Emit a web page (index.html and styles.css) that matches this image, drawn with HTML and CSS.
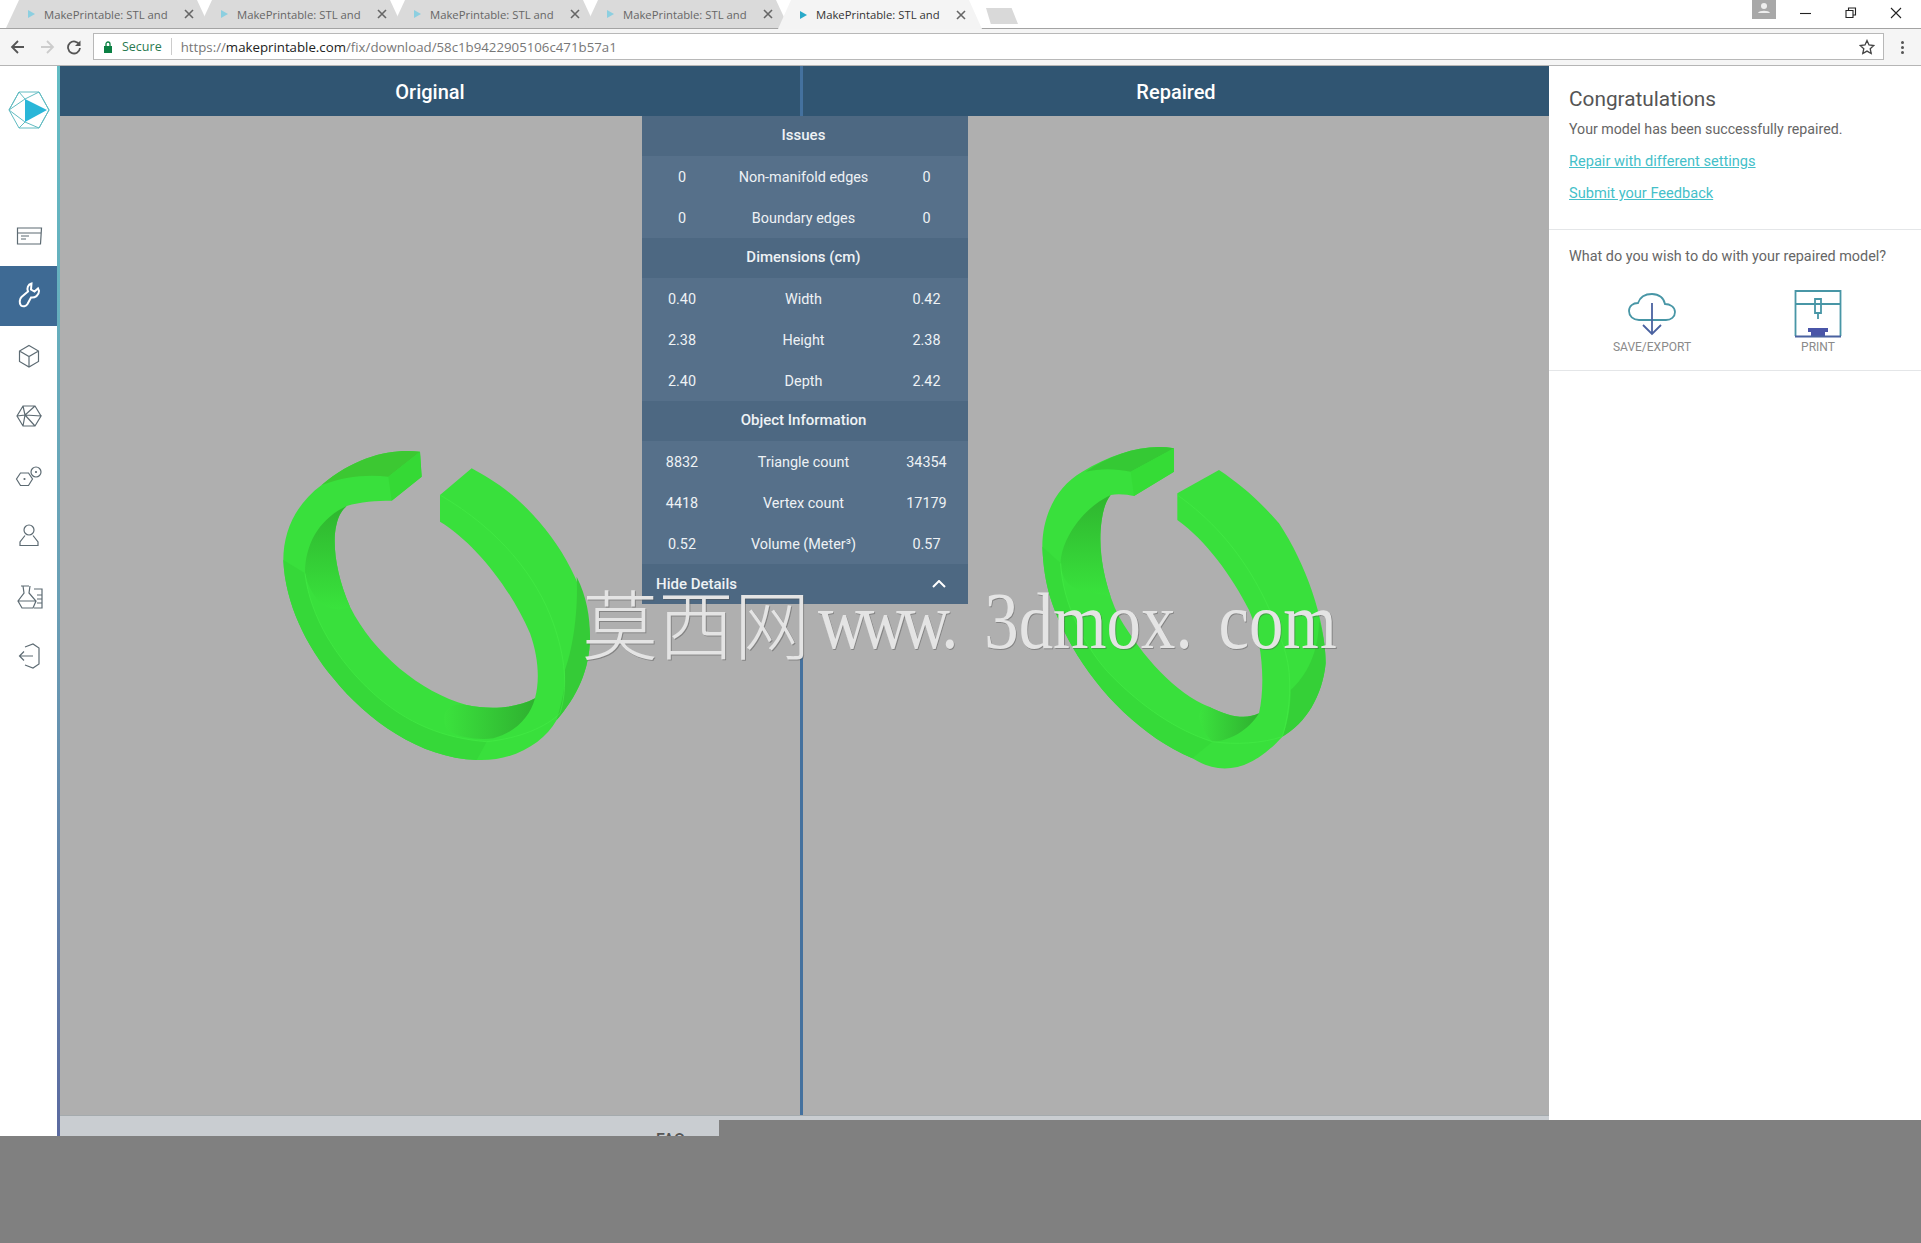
FILE: index.html
```html
<!DOCTYPE html>
<html lang="en">
<head>
    <meta charset="UTF-8">
    <title>MakePrintable: STL and 3D file repair</title>
    <link rel="stylesheet" href="styles.css">
</head>
<body>
    <div class="tabstrip">
        <div class="tab">
            <svg class="favicon" viewBox="0 0 10 10"><path d="M2 1l7 4-7 4z"/></svg>
            <span class="tab-title">MakePrintable: STL and</span>
            <svg class="tab-close" viewBox="0 0 10 10"><path d="M1 1l8 8M9 1l-8 8"/></svg>
        </div>
        <div class="tab">
            <svg class="favicon" viewBox="0 0 10 10"><path d="M2 1l7 4-7 4z"/></svg>
            <span class="tab-title">MakePrintable: STL and</span>
            <svg class="tab-close" viewBox="0 0 10 10"><path d="M1 1l8 8M9 1l-8 8"/></svg>
        </div>
        <div class="tab">
            <svg class="favicon" viewBox="0 0 10 10"><path d="M2 1l7 4-7 4z"/></svg>
            <span class="tab-title">MakePrintable: STL and</span>
            <svg class="tab-close" viewBox="0 0 10 10"><path d="M1 1l8 8M9 1l-8 8"/></svg>
        </div>
        <div class="tab">
            <svg class="favicon" viewBox="0 0 10 10"><path d="M2 1l7 4-7 4z"/></svg>
            <span class="tab-title">MakePrintable: STL and</span>
            <svg class="tab-close" viewBox="0 0 10 10"><path d="M1 1l8 8M9 1l-8 8"/></svg>
        </div>
        <div class="tab active">
            <svg class="favicon" viewBox="0 0 10 10"><path d="M2 1l7 4-7 4z"/></svg>
            <span class="tab-title">MakePrintable: STL and</span>
            <svg class="tab-close" viewBox="0 0 10 10"><path d="M1 1l8 8M9 1l-8 8"/></svg>
        </div>
        <div class="new-tab"></div>
        <div class="window-buttons">
            <div class="avatar">
                <svg viewBox="0 0 24 19" width="24" height="19"><circle cx="12" cy="6" r="3" fill="#eee"/><path d="M6 13c1-3 11-3 12 0z" fill="#eee"/></svg>
            </div>
            <svg class="win-icon" viewBox="0 0 12 12"><path d="M0 6.500h11"/></svg>
            <svg class="win-icon" viewBox="0 0 12 12"><path d="M1 3.500h7v7H1zM3.500 3.500V1h7v7H8"/></svg>
            <svg class="win-icon" viewBox="0 0 12 12"><path d="M1 1l10 10M11 1L1 11"/></svg>
        </div>
    </div>

    <div class="toolbar">
        <svg class="nav-icon" viewBox="0 0 16 16"><path d="M14 8H2M8 2L2 8l6 6"/></svg>
        <svg class="nav-icon off" viewBox="0 0 16 16"><path d="M2 8h12M8 2l6 6-6 6"/></svg>
        <svg class="nav-icon" viewBox="0 0 16 16"><path d="M13.500 6A6 6 0 1 0 14 9"/><path class="solid" d="M14.500 1.500v5.500h-5.500z"/></svg>
        <div class="omnibox">
            <svg class="lock" viewBox="0 0 10 12"><path d="M1 5h8v7H1z"/><path class="shackle" d="M3 5V3a2 2 0 0 1 4 0v2"/></svg>
            <span class="secure">Secure</span>
            <span class="url"><span class="url-dim">https://</span>makeprintable.com<span class="url-dim">/fix/download/58c1b9422905106c471b57a1</span></span>
            <svg class="star" viewBox="0 0 16 16"><path d="M8 1.500l2 4.500 4.800.5-3.600 3.200 1 4.800L8 12.100l-4.200 2.400 1-4.800L1.200 6.500 6 6z"/></svg>
        </div>
        <div class="menu-dots"><i></i><i></i><i></i></div>
    </div>

    <div class="app">
        <nav class="sidebar">
            <div class="logo">
                <svg viewBox="0 0 44 40" width="44" height="40">
                    <path class="logo-lines" d="M12 2h20l10 18-10 18H12L2 20zM12 2l6 7M12 2L2 20l16 12M32 2L18 9M32 2l10 18M2 20l16-11M12 38l6-6M32 38L18 32M32 38l10-18"/>
                    <path d="M18 9l22 11-22 12z" fill="#29b6d8"/>
                </svg>
            </div>
            <a class="nav-item">
                <svg viewBox="0 0 30 30"><path d="M3.500 7h24l-1 16h-23zM3.500 12h24M7 15h8M7 18h5"/></svg>
            </a>
            <a class="nav-item current">
                <svg viewBox="0 0 30 30"><path d="M17.500 2.500C14 3.500 12.500 7 14 10.500L7.500 16C5.500 18 5 22 7 24.500 9 26 12 25.500 13.500 23L17 16.500C21 17 25 14.500 25 10L24 7.500 20.500 10.500 17 8.500Z"/></svg>
            </a>
            <a class="nav-item">
                <svg viewBox="0 0 30 30"><path d="M15 4.500l9.500 5.500v10.500L15 26l-9.500-5.500V10zM5.500 10l9.500 5.500 9.500-5.500M15 15.500V26"/></svg>
            </a>
            <a class="nav-item">
                <svg viewBox="0 0 30 30"><path d="M9 5h12l6 10-6 10H9L3 15zM9 5l2 9-8 1M21 5l-10 9 10 11M11 14l-2 11M21 25l6-10-16-1"/></svg>
            </a>
            <a class="nav-item">
                <svg viewBox="0 0 30 30"><path d="M6.500 12h8l4 6-4 6.500h-8l-4-6.500z"/><circle cx="22" cy="11" r="5"/><circle cx="22" cy="11" r=".5"/><circle cx="10.500" cy="18" r=".5"/></svg>
            </a>
            <a class="nav-item">
                <svg viewBox="0 0 30 30"><circle cx="15" cy="9" r="5"/><path d="M11 14.500L6 21v3.500h18V21l-5-6.500"/></svg>
            </a>
            <a class="nav-item">
                <svg viewBox="0 0 30 30"><path d="M7 5h8M9 5l1 7-6 8 4 7h11l3-7-7-8 1-7M4.500 20h17M20 8h8v19h-8M23 14h5M23 18h5M23 22h5"/></svg>
            </a>
            <a class="nav-item">
                <svg viewBox="0 0 30 30"><path d="M11 6l8-3 6 4v16l-6 4-8-3M19 15H6M10 10.500L5.500 15l4.500 4.500"/></svg>
            </a>
        </nav>

        <main class="workspace">
            <div class="panes">
                <section class="pane pane-original">
                    <h2 class="pane-title">Original</h2>
                    <div class="stage">
                        <svg class="ring ring-a" viewBox="0 0 1080 1020">
                            <defs>
                                <linearGradient id="wallA" x1="0" y1="0" x2="0" y2="1">
                                    <stop offset="0" stop-color="#2fb52f"/>
                                    <stop offset="1" stop-color="#39e33c"/>
                                </linearGradient>
                                <linearGradient id="wallB" x1="1" y1="0" x2="0" y2="0">
                                    <stop offset="0" stop-color="#2fb030"/>
                                    <stop offset="1" stop-color="#3be23d"/>
                                </linearGradient>
                            </defs>
                            <path fill="#39e03c" d="M480 65C400 55 290 75 185 165 110 220 70 300 70 390 75 520 140 650 220 745 320 870 480 985 650 990 760 995 850 940 890 870 950 800 990 720 990 620 985 480 900 330 790 225 740 175 680 140 635 115L540 195V275C640 335 750 470 810 610 835 680 840 750 825 805 770 835 690 840 620 825 480 785 340 670 270 530 235 450 220 370 225 310 230 270 240 245 260 228 300 215 350 212 395 212L485 140Z"/>
                            <path fill="#3cc832" d="M480 65C400 55 290 75 185 165 250 140 320 132 385 140Z"/>
                            <path fill="#35d935" d="M480 65L485 140 395 212 385 140Z"/>
                            <path fill="url(#wallA)" d="M260 228C180 265 135 340 135 430 150 500 200 560 270 530 235 450 220 370 225 310 230 270 240 245 260 228Z"/>
                            <path fill="url(#wallB)" d="M825 805C770 835 690 840 620 825 560 815 540 850 560 900 600 925 660 930 700 925 770 905 810 860 825 805Z"/>
                            <path fill="#35cb37" d="M950 440C980 500 990 560 990 620 990 720 950 800 890 870 905 820 917 770 915 720 940 650 955 540 950 440Z"/>
                            <path fill="#36d839" d="M135 430C150 560 230 690 340 790 440 880 550 925 680 935L650 990C480 985 320 870 220 745 140 650 75 520 70 390Z"/>
                            <path fill="none" stroke="#44ec46" stroke-width="2" d="M135 430C150 560 230 690 340 790 440 880 550 925 680 935 780 925 860 890 900 850 925 770 915 680 880 580 830 440 720 300 540 195"/>
                        </svg>
                    </div>
                </section>
                <section class="pane pane-repaired">
                    <h2 class="pane-title">Repaired</h2>
                    <div class="stage">
                        <svg class="ring ring-b" viewBox="0 0 1020 1050">
                            <path fill="#39e03c" d="M465 55C380 40 280 70 190 125 110 170 70 260 70 350 75 470 100 540 160 650 240 790 370 920 520 985 600 1035 690 1030 790 920 860 880 910 800 920 700 920 570 860 400 780 280 720 210 660 160 600 120L475 190V270C560 330 640 440 690 540 730 630 740 760 720 850 680 870 630 860 570 830 470 790 370 680 300 560 260 480 240 380 245 300 248 260 255 220 275 195 300 190 330 195 345 198L465 125Z"/>
                            <path fill="#35c934" d="M465 55C380 40 280 70 200 125 240 115 290 115 335 125Z"/>
                            <path fill="#35dc36" d="M465 55V125L345 198 335 125Z"/>
                            <path fill="url(#wallA)" d="M275 195C180 240 125 340 125 400 130 500 220 480 275 500 255 440 240 370 245 300 248 260 255 220 275 195Z"/>
                            <path fill="url(#wallB)" d="M720 850C680 870 630 860 570 830 530 830 530 880 580 935 630 935 690 900 720 850Z"/>
                            <path fill="#35d037" d="M900 570C915 620 920 660 920 700 910 800 860 880 790 920 810 870 815 820 815 780 860 740 900 670 900 570Z"/>
                            <path fill="#36da39" d="M125 400C130 520 200 660 280 740 370 830 470 900 580 935L520 985C370 920 240 790 160 650 100 540 75 470 70 350Z"/>
                            <path fill="none" stroke="#44ec46" stroke-width="2" d="M125 400C130 520 200 660 280 740 370 830 470 900 580 935 650 945 730 940 790 920 815 840 820 740 800 670 760 540 680 340 475 195"/>
                        </svg>
                    </div>
                </section>
            </div>
            <div class="faq-strip"><span>FAQs</span></div>

            <div class="details">
                <div class="details-head">Issues</div>
                <div class="details-row"><span>0</span><span>Non-manifold edges</span><span>0</span></div>
                <div class="details-row"><span>0</span><span>Boundary edges</span><span>0</span></div>
                <div class="details-head">Dimensions (cm)</div>
                <div class="details-row"><span>0.40</span><span>Width</span><span>0.42</span></div>
                <div class="details-row"><span>2.38</span><span>Height</span><span>2.38</span></div>
                <div class="details-row"><span>2.40</span><span>Depth</span><span>2.42</span></div>
                <div class="details-head">Object Information</div>
                <div class="details-row"><span>8832</span><span>Triangle count</span><span>34354</span></div>
                <div class="details-row"><span>4418</span><span>Vertex count</span><span>17179</span></div>
                <div class="details-row"><span>0.52</span><span>Volume (Meter³)</span><span>0.57</span></div>
                <div class="details-foot">
                    <span>Hide Details</span>
                    <svg viewBox="0 0 14 8" width="14" height="8"><path d="M1 7l6-6 6 6"/></svg>
                </div>
            </div>
        </main>

        <aside class="panel">
            <div class="panel-section">
                <h3>Congratulations</h3>
                <p>Your model has been successfully repaired.</p>
                <a class="panel-link">Repair with different settings</a>
                <a class="panel-link">Submit your Feedback</a>
            </div>
            <div class="panel-section">
                <p class="question">What do you wish to do with your repaired model?</p>
                <div class="actions">
                    <div class="action">
                        <svg viewBox="0 0 48 48" width="48" height="48">
                            <path class="icon-teal" d="M14 30H11C5 30 1 26 1 21S5 13 10 13C12 7 17 4 24 4 31 4 36 8 37 14 42 14 47 17 47 22S43 30 38 30H14Z"/>
                            <path class="icon-blue" d="M24 13V44M15 35l9 9 9-9"/>
                        </svg>
                        <span>SAVE/EXPORT</span>
                    </div>
                    <div class="action">
                        <svg viewBox="0 0 48 48" width="48" height="48">
                            <path class="icon-teal" d="M1.500 46V1h45v45M1.500 14h45"/>
                            <path class="icon-teal" d="M21 9h6v14h-6zM24 23v6"/>
                            <path d="M14 38h20v4h-3v4H17v-4h-3z" fill="#4a55a8"/>
                            <path class="icon-blue" d="M1 46.500h46"/>
                        </svg>
                        <span>PRINT</span>
                    </div>
                </div>
            </div>
        </aside>
    </div>
    <div class="bottom-notch"></div>

    <div class="watermark"><span class="wm-cjk">莫西网</span><span class="wm-latin"><span class="wm-www">www</span>. 3dmox. com</span></div>
</body>
</html>
```

FILE: styles.css
```css
* {
    box-sizing: border-box;
}

body {
    margin: 0;
    width: 1921px;
    height: 1243px;
    overflow: hidden;
    position: relative;
    background: #808080;
    font-family: Roboto, "Liberation Sans", sans-serif;
    color: #555;
}

/* browser chrome */
.tabstrip {
    height: 29px;
    display: flex;
    padding-left: 6px;
    background: #fff;
    border-bottom: 1px solid #a3a3a3;
}

.tab {
    width: 204px;
    height: 28px;
    margin-right: -11px;
    display: flex;
    align-items: center;
    padding-left: 20px;
    background: #dadada;
    clip-path: polygon(0 100%, 13px 0, calc(100% - 13px) 0, 100% 100%);
    font-family: "Open Sans", sans-serif;
    font-size: 11.300px;
    color: #666;
}

.tab.active {
    height: 29px;
    background: #f4f4f4;
    z-index: 1;
    color: #333;
}

.favicon {
    width: 10px;
    height: 10px;
    fill: #8ccfe0;
    flex: none;
}

.active .favicon {
    fill: #29a9c9;
}

.tab-title {
    width: 125px;
    margin-left: 8px;
    white-space: nowrap;
}

.tab-close {
    width: 10px;
    height: 10px;
    margin-left: 15px;
    flex: none;
    fill: none;
    stroke: #666;
    stroke-width: 1.600;
}

.new-tab {
    width: 32px;
    height: 16px;
    margin: 8px 0 0 15px;
    background: #d9d9d9;
    clip-path: polygon(0 0, 80% 0, 100% 100%, 15% 100%);
}

.window-buttons {
    margin-left: auto;
    padding-right: 19px;
    display: flex;
    align-items: flex-start;
}

.avatar {
    width: 24px;
    height: 19px;
    background: #a8a8a8;
    margin-right: 24px;
}

.win-icon {
    width: 12px;
    height: 12px;
    margin: 7px 0 0 33px;
    fill: none;
    stroke: #222;
    stroke-width: 1.100;
}

.avatar + .win-icon {
    margin-left: 0;
}

.toolbar {
    height: 37px;
    display: flex;
    align-items: center;
    padding-left: 10px;
    background: #f5f5f5;
    border-bottom: 1px solid #b5b5b5;
}

.nav-icon {
    width: 16px;
    height: 16px;
    margin-right: 13px;
    flex: none;
    fill: none;
    stroke: #555;
    stroke-width: 1.800;
}

.nav-icon:nth-child(3) {
    margin-left: -2px;
    margin-right: 11px;
}

.nav-icon.off {
    stroke: #ccc;
}

.nav-icon .solid {
    fill: #555;
    stroke: none;
}

.omnibox {
    width: 1791px;
    height: 27px;
    margin: 0 0 1px;
    display: flex;
    align-items: center;
    padding: 0 8px 0 9px;
    background: #fff;
    border: 1px solid #b8b8b8;
    font-family: "Open Sans", sans-serif;
    font-size: 13.250px;
}

.lock {
    width: 10px;
    height: 12px;
    fill: #0b8043;
}

.lock .shackle {
    fill: none;
    stroke: #0b8043;
    stroke-width: 1.300;
}

.secure {
    margin-left: 9px;
    padding-right: 9px;
    border-right: 1px solid #ccc;
    color: #2a7a50;
    font-size: 12.500px;
}

.url {
    margin-left: 9px;
    color: #222;
}

.url-dim {
    color: #777;
}

.star {
    width: 16px;
    height: 16px;
    margin-left: auto;
    fill: none;
    stroke: #444;
    stroke-width: 1.300;
}

.menu-dots {
    display: flex;
    flex-direction: column;
    gap: 2px;
    margin: 0 0 0 17px;
}

.menu-dots i {
    width: 3px;
    height: 3px;
    background: #555;
    border-radius: 50%;
}

/* app */
.app {
    height: 1070px;
    display: flex;
}

.sidebar {
    width: 60px;
    flex: none;
    background: #fff;
    border-right: 3px solid;
    border-image: linear-gradient(to bottom, #63bcc4, #6a9fb5 50%, #5b6aa0) 1;
}

.logo {
    height: 140px;
    display: flex;
    padding: 24px 0 0 7px;
}

.logo-lines {
    fill: none;
    stroke: #62bcc2;
    stroke-width: 1;
}

.nav-item {
    height: 60px;
    display: flex;
    align-items: center;
    justify-content: center;
}

.nav-item svg {
    width: 30px;
    height: 30px;
    fill: none;
    stroke: #5d6b73;
    stroke-width: 1.200;
}

.nav-item.current {
    background: #3e6a94;
}

.nav-item.current svg {
    stroke: #fff;
    stroke-width: 2;
}

.workspace {
    width: 1489px;
    flex: none;
    display: flex;
    flex-direction: column;
    position: relative;
}

.panes {
    flex: 1;
    display: flex;
}

.pane {
    display: flex;
    flex-direction: column;
}

.pane-original {
    width: 743px;
    border-right: 3px solid #44719e;
}

.pane-repaired {
    flex: 1;
}

.pane-title {
    height: 50px;
    margin: 0;
    line-height: 52px;
    text-align: center;
    background: #305572;
    color: #fff;
    font-size: 20px;
    font-weight: 500;
}

.stage {
    flex: 1;
    position: relative;
    background: #afafaf;
}

.ring {
    position: absolute;
}

.ring-a {
    left: 200px;
    top: 314px;
    width: 360px;
    height: 340px;
}

.ring-b {
    left: 216px;
    top: 314px;
    width: 340px;
    height: 350px;
}

.faq-strip {
    height: 21px;
    background: #c9cdd1;
    border-top: 1px solid #a4aaad;
    padding: 14px 0 0 596px;
    overflow: hidden;
    font-size: 16px;
    font-weight: 500;
    color: #555;
}

/* comparison table over the two panes */
.details {
    position: absolute;
    left: 582px;
    top: 50px;
    width: 326px;
    background: #56708a;
    color: #eef2f5;
    font-size: 14.400px;
}

.details-head {
    height: 40px;
    line-height: 38px;
    padding-right: 3px;
    text-align: center;
    background: #4d6882;
    font-size: 15px;
    font-weight: 500;
}

.details-row {
    height: 41px;
    padding-top: 2px;
    display: grid;
    grid-template-columns: 80px 163px 83px;
    align-items: center;
    text-align: center;
}

.details-foot {
    height: 40px;
    display: flex;
    align-items: center;
    justify-content: space-between;
    padding: 0 22px 0 14px;
    background: #4d6882;
    font-size: 15px;
    font-weight: 500;
}

.details-foot svg {
    fill: none;
    stroke: #fff;
    stroke-width: 2;
}

/* right panel */
.panel {
    flex: 1;
    background: #fff;
}

.panel-section {
    padding: 21px 20px 0;
    border-bottom: 1px solid #e4e6e8;
}

.panel-section:first-child {
    height: 164px;
}

.panel-section:last-child {
    height: 141px;
    padding-top: 17px;
}

.panel h3 {
    margin: 0 0 8px;
    font-size: 20.800px;
    font-weight: 400;
    line-height: 24px;
    color: #555;
}

.panel p {
    margin: 0;
    font-size: 14.200px;
    line-height: 20px;
    color: #666;
}

.panel p.question {
    font-size: 14.400px;
}

.panel-link {
    display: block;
    margin-top: 12px;
    font-size: 14.600px;
    line-height: 20px;
    color: #45bfc9;
    text-decoration: underline;
}

.actions {
    display: flex;
    gap: 66px;
    margin: 23px 0 0 33px;
}

.action {
    width: 100px;
    display: flex;
    flex-direction: column;
    align-items: center;
    gap: 2px;
    font-size: 12px;
    color: #8a8a8a;
}

.icon-teal {
    fill: none;
    stroke: #4896a6;
    stroke-width: 1.800;
}

.icon-blue {
    fill: none;
    stroke: #4a62a0;
    stroke-width: 1.800;
}

.bottom-notch {
    position: absolute;
    left: 719px;
    right: 0;
    top: 1120px;
    height: 16px;
    background: #808080;
}

.watermark {
    position: absolute;
    left: 582px;
    top: 579px;
    display: flex;
    align-items: flex-end;
    color: #e4e4e4;
    text-shadow: 1px 1px 0 rgba(80, 80, 80, 0.45);
    white-space: nowrap;
    pointer-events: none;
}

.wm-cjk {
    font-family: "Noto Sans CJK SC", sans-serif;
    font-weight: 300;
    font-size: 76px;
    line-height: 84px;
}

.wm-latin {
    font-family: "Liberation Serif", serif;
    font-size: 80px;
    line-height: 84px;
    word-spacing: 10px;
    transform: scaleX(0.86);
    transform-origin: left;
    margin-left: 8px;
}

.wm-www {
    letter-spacing: -10px;
}
```
